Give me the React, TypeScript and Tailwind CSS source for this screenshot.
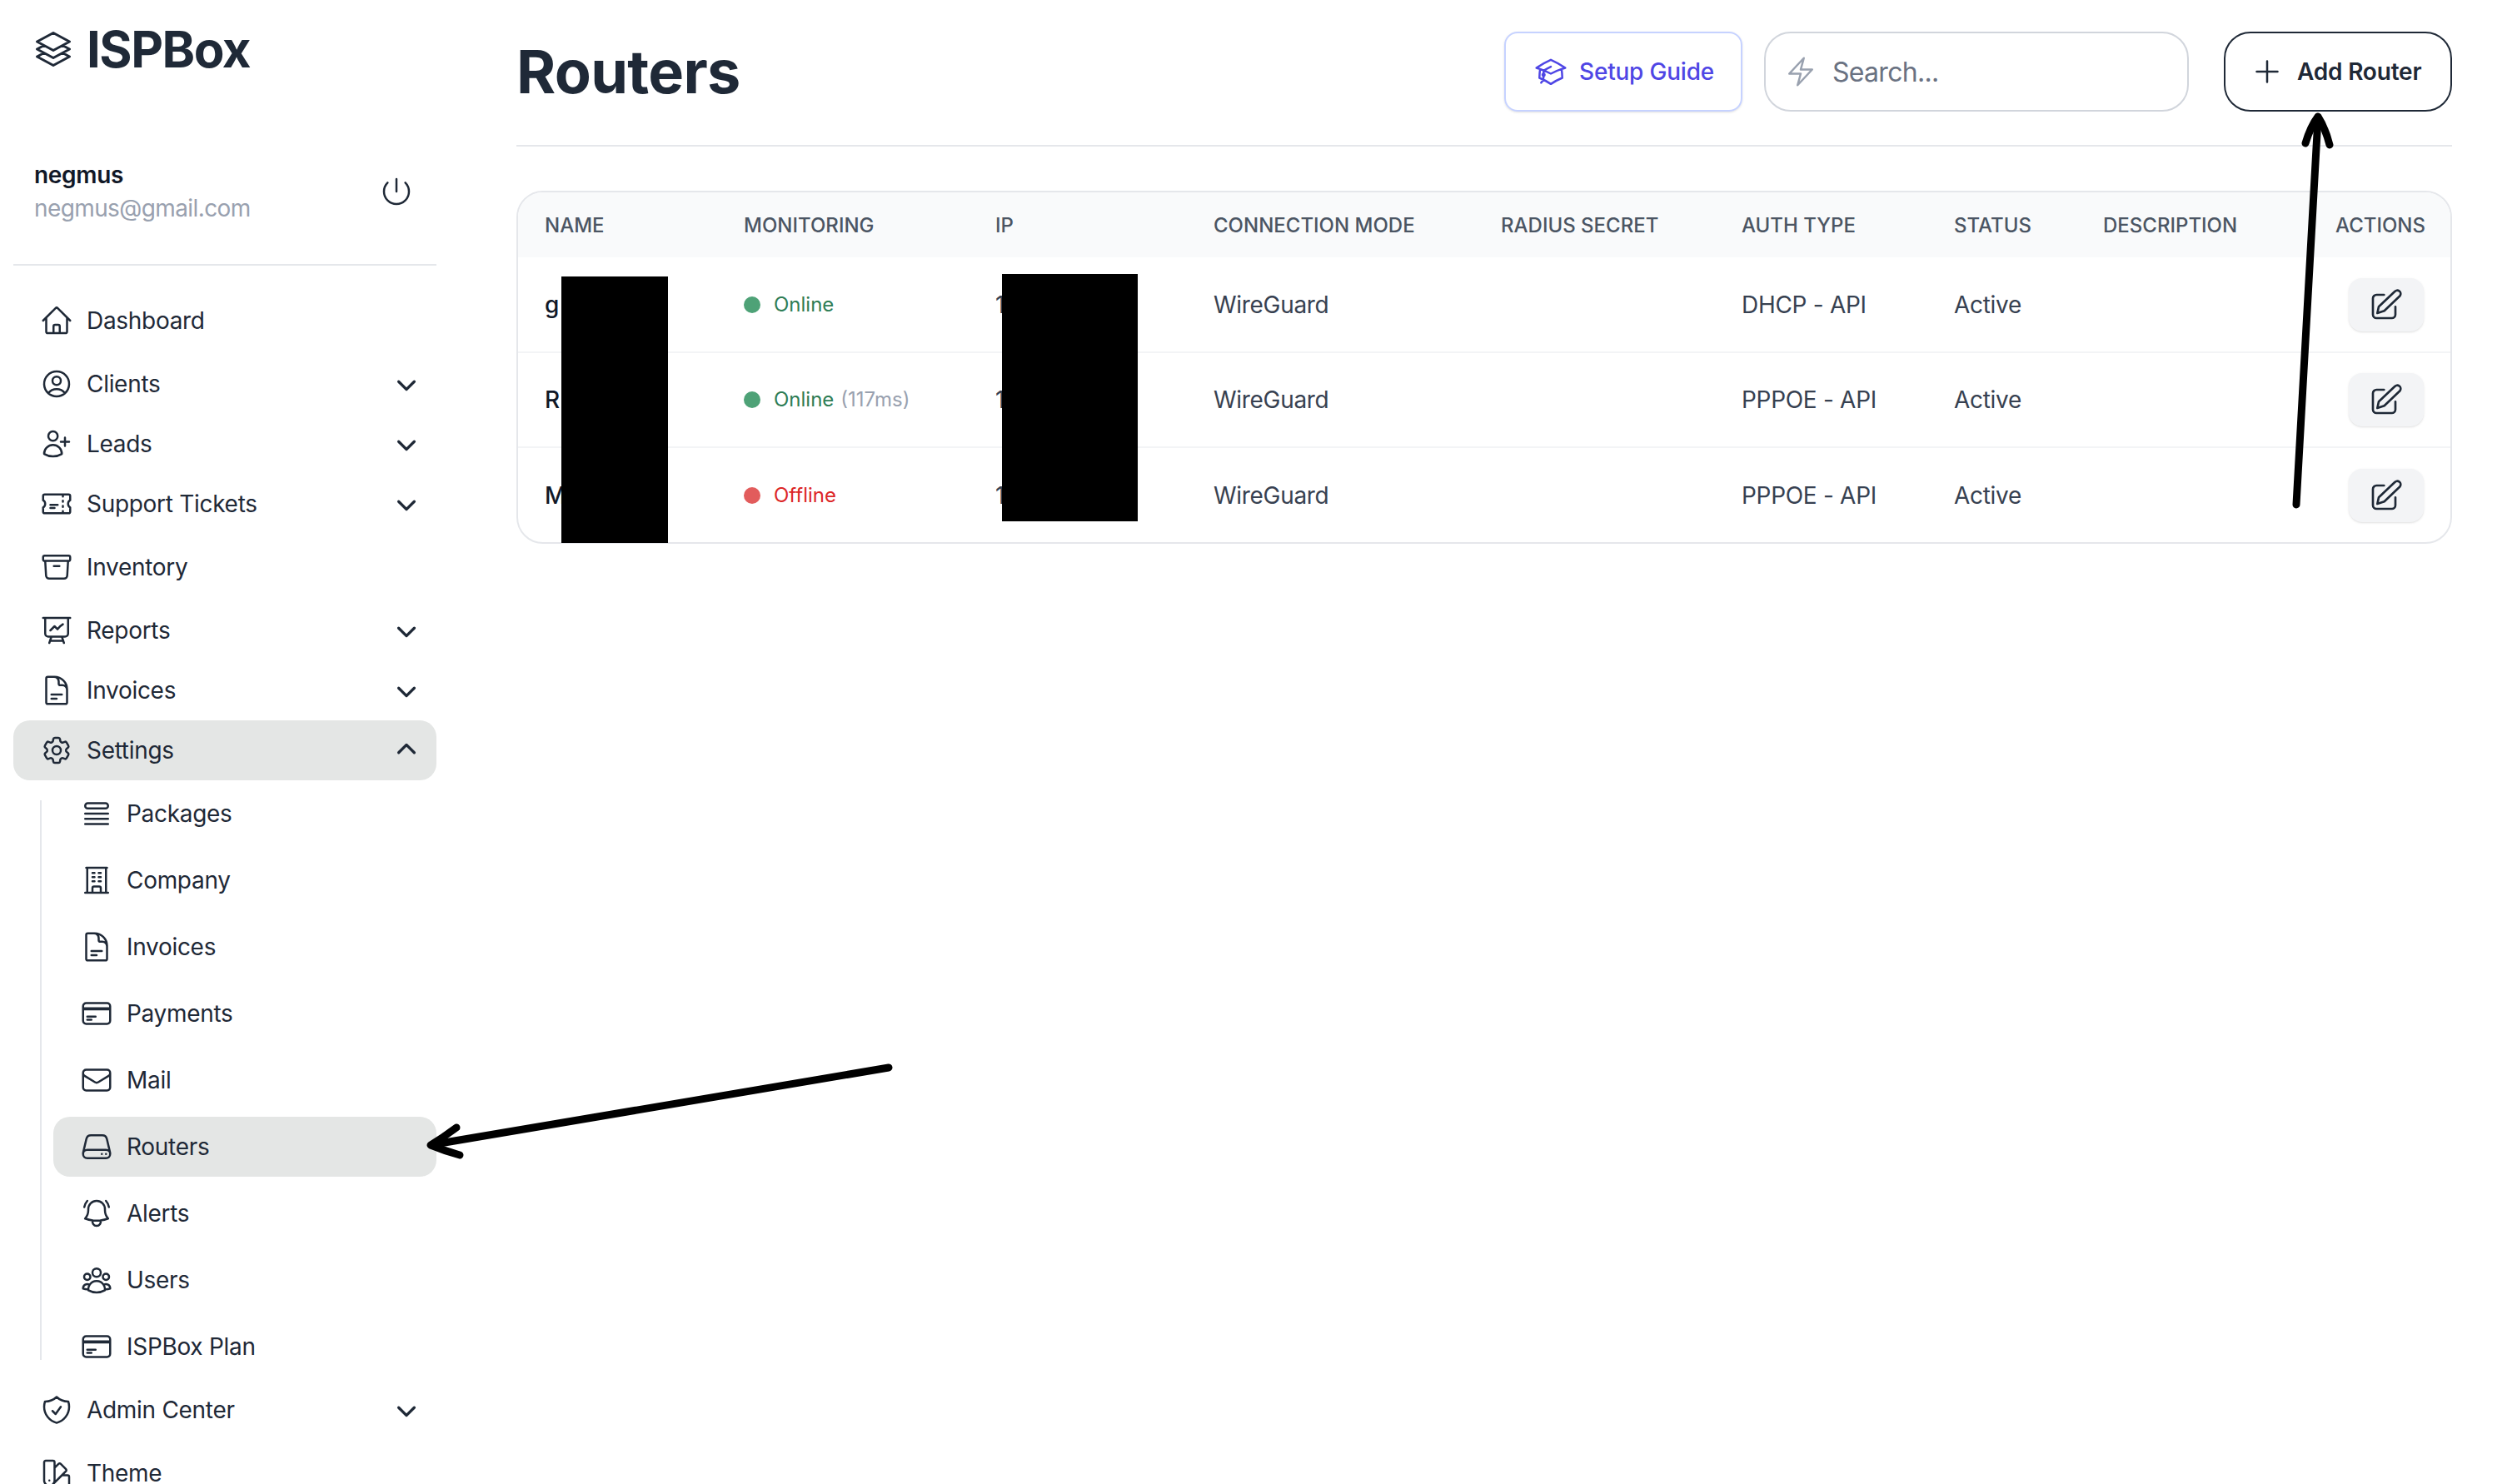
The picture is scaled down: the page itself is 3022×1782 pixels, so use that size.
import type { ComponentType, ReactNode } from "react";
import {
  HiMiniChevronDown,
  HiMiniChevronUp,
  HiOutlineAcademicCap,
  HiOutlineArchiveBox,
  HiOutlineBellAlert,
  HiOutlineBolt,
  HiOutlineBuildingOffice,
  HiOutlineCog6Tooth,
  HiOutlineCreditCard,
  HiOutlineDocumentText,
  HiOutlineEnvelope,
  HiOutlineHome,
  HiOutlinePlus,
  HiOutlinePower,
  HiOutlinePresentationChartLine,
  HiOutlineQueueList,
  HiOutlineServer,
  HiOutlineShieldCheck,
  HiOutlineSquare3Stack3D,
  HiOutlineSwatch,
  HiOutlineTicket,
  HiOutlineUserCircle,
  HiOutlineUserGroup,
  HiOutlineUserPlus,
} from "react-icons/hi2";

type Icon = ComponentType<{ className?: string }>;

const topNav: { label: string; icon: Icon; caret?: boolean }[] = [
  { label: "Dashboard", icon: HiOutlineHome },
  { label: "Clients", icon: HiOutlineUserCircle, caret: true },
  { label: "Leads", icon: HiOutlineUserPlus, caret: true },
  { label: "Support Tickets", icon: HiOutlineTicket, caret: true },
  { label: "Inventory", icon: HiOutlineArchiveBox },
  { label: "Reports", icon: HiOutlinePresentationChartLine, caret: true },
  { label: "Invoices", icon: HiOutlineDocumentText, caret: true },
];

const settingsNav: { label: string; icon: Icon; active?: boolean }[] = [
  { label: "Packages", icon: HiOutlineQueueList },
  { label: "Company", icon: HiOutlineBuildingOffice },
  { label: "Invoices", icon: HiOutlineDocumentText },
  { label: "Payments", icon: HiOutlineCreditCard },
  { label: "Mail", icon: HiOutlineEnvelope },
  { label: "Routers", icon: HiOutlineServer, active: true },
  { label: "Alerts", icon: HiOutlineBellAlert },
  { label: "Users", icon: HiOutlineUserGroup },
  { label: "ISPBox Plan", icon: HiOutlineCreditCard },
];

const routers = [
  { name: "g", online: true, latency: "", ip: "1", auth: "DHCP - API" },
  { name: "R", online: true, latency: "(117ms)", ip: "1", auth: "PPPOE - API" },
  { name: "M", online: false, latency: "", ip: "1", auth: "PPPOE - API" },
];

const NavRow = ({ label, icon: Icon, caret }: { label: string; icon: Icon; caret?: boolean }) => (
  <li className={`flex items-center gap-4 px-8 ${caret ? "h-[72px]" : "h-[80px]"}`}>
    <Icon className="h-10 w-10 shrink-0" />
    <span>{label}</span>
    {caret && <HiMiniChevronDown className="ml-auto mr-[-18px] h-11 w-11" />}
  </li>
);

const Th = ({ className, children }: { className: string; children: ReactNode }) => (
  <th className={`pl-8 pt-px text-left text-[24px] font-medium uppercase tracking-normal text-[#4b5563] ${className}`}>{children}</th>
);

const EditIcon = () => (
  <svg viewBox="0 0 24 24" className="h-10 w-10 text-[#1f2937]" fill="none" stroke="currentColor" strokeWidth="1.6" strokeLinecap="round" strokeLinejoin="round">
    <path d="M10.4 4.8H5a2.6 2.6 0 0 0-2.6 2.6V19A2.6 2.6 0 0 0 5 21.6h11a2.6 2.6 0 0 0 2.6-2.6v-5.6" />
    <path d="M5.6 18 6.6 13.4 18 2.6a2.3 2.3 0 0 1 3.9 2.9L10.6 16.4Z" />
  </svg>
);

export default function App() {
  return (
    <div className="relative flex h-[1782px] w-[3022px] overflow-hidden bg-white font-['Inter',sans-serif] text-[28px] tracking-[-0.3px] text-[#1f2937]">
      <aside className="w-[540px] shrink-0 px-4">
        <div className="flex h-[118px] items-center gap-4 pl-6">
          <HiOutlineSquare3Stack3D className="h-12 w-12" />
          <span className="text-[60px] font-bold tracking-[-1.5px]">ISPBox</span>
        </div>
        <div className="flex items-center justify-between border-b-2 border-gray-200 pb-[47px] pl-[25px] pr-[28px] pt-[72px]">
          <div className="leading-[40px]">
            <div className="font-semibold text-[#111827]">negmus</div>
            <div className="tracking-[-0.6px] text-gray-400">negmus@gmail.com</div>
          </div>
          <HiOutlinePower className="h-10 w-10" />
        </div>
        <ul className="mt-[26px]">
          {topNav.map((item) => (
            <NavRow key={item.label} {...item} />
          ))}
          <li className="flex h-[72px] items-center gap-4 rounded-[20px] bg-[#e4e6e5] px-8">
            <HiOutlineCog6Tooth className="h-10 w-10 shrink-0" />
            <span>Settings</span>
            <HiMiniChevronUp className="ml-auto mr-[-18px] h-11 w-11" />
          </li>
          <li>
            <ul className="relative ml-8 flex flex-col gap-2 py-1 pl-4">
              <span className="absolute bottom-6 left-0 top-6 w-0.5 bg-gray-200" />
              {settingsNav.map(({ label, icon: Icon, active }) => (
                <li
                  key={label}
                  className={`flex h-[72px] items-center gap-4 rounded-[20px] px-8 ${active ? "bg-[#e4e6e5]" : ""}`}
                >
                  <Icon className="h-10 w-10 shrink-0" />
                  <span>{label}</span>
                </li>
              ))}
            </ul>
          </li>
          <NavRow label="Admin Center" icon={HiOutlineShieldCheck} caret />
          <NavRow label="Theme" icon={HiOutlineSwatch} />
        </ul>
      </aside>

      <main className="min-w-0 flex-1 pl-20 pr-[78px]">
        <header className="flex h-[176px] items-center border-b-2 border-gray-200 pb-[2px]">
          <h1 className="text-[72px] font-bold tracking-[-0.7px]">Routers</h1>
          <button className="ml-auto flex h-[96px] w-[286px] items-center gap-[14px] rounded-2xl border-2 border-indigo-200 pl-[34px] font-medium tracking-[-0.2px] text-[#4f46e5] shadow-sm">
            <HiOutlineAcademicCap className="h-10 w-10" />
            Setup Guide
          </button>
          <div className="ml-[26px] flex h-[96px] w-[510px] items-center gap-4 rounded-[32px] border-2 border-gray-300 pl-[22px] text-[32px] tracking-[-0.7px] text-gray-500">
            <HiOutlineBolt className="h-10 w-10 text-gray-400" />
            <span className="pl-0.5 pt-[2px]">Search...</span>
          </div>
          <button className="ml-[42px] flex h-[96px] w-[274px] items-center gap-4 rounded-[32px] border-2 border-[#1f2937] pl-[30px] font-semibold tracking-[-0.2px]">
            <HiOutlinePlus className="h-10 w-10" />
            Add Router
          </button>
        </header>

        <div className="relative mt-[53px] overflow-hidden rounded-[32px] border-2 border-gray-200">
          <table className="w-full table-fixed border-collapse">
            <thead>
              <tr className="h-[78px] bg-[#f9fafb]">
                <Th className="w-[239px] pl-[32px]">Name</Th>
                <Th className="w-[302px]">Monitoring</Th>
                <Th className="w-[262px]">IP</Th>
                <Th className="w-[345px]">Connection Mode</Th>
                <Th className="w-[289px]">Radius Secret</Th>
                <Th className="w-[255px]">Auth Type</Th>
                <Th className="w-[179px]">Status</Th>
                <Th className="w-[279px]">Description</Th>
                <Th className="w-[170px]">Actions</Th>
              </tr>
            </thead>
            <tbody className="text-[#374151]">
              {routers.map((router, i) => (
                <tr key={i} className={`h-[114px] ${i > 0 ? "border-t-2 border-gray-100" : ""}`}>
                  <td className="pl-[32px] font-medium text-[#111827]">{router.name}</td>
                  <td className="pl-8 text-[24px] tracking-normal">
                    <span className="flex items-center gap-4">
                      <span className={`h-5 w-5 rounded-full ${router.online ? "bg-[#4ea277]" : "bg-[#e25c5c]"}`} />
                      <span className={router.online ? "text-[#2f7d55]" : "text-[#dc2626]"}>
                        {router.online ? "Online" : "Offline"}
                        {router.latency && <span className="ml-2 text-gray-400">{router.latency}</span>}
                      </span>
                    </span>
                  </td>
                  <td className="pl-8">{router.ip}</td>
                  <td className="pl-8">WireGuard</td>
                  <td className="pl-8" />
                  <td className="pl-8">{router.auth}</td>
                  <td className="pl-8">Active</td>
                  <td className="pl-8" />
                  <td className="pl-8">
                    <button className="ml-[16px] flex h-16 w-[90px] items-center justify-center rounded-2xl bg-gray-100 shadow-sm">
                      <EditIcon />
                    </button>
                  </td>
                </tr>
              ))}
            </tbody>
          </table>
        </div>
      </main>

      {/* redaction blocks painted over the screenshot */}
      <div className="absolute left-[674px] top-[332px] h-[320px] w-[128px] bg-black" />
      <div className="absolute left-[1203px] top-[329px] h-[297px] w-[163px] bg-black" />

      {/* hand drawn annotation arrows */}
      <svg className="pointer-events-none absolute inset-0" width="3022" height="1782" fill="none" stroke="#000" strokeLinecap="round" strokeLinejoin="round">
        <path d="M2757 606 L2783 142" strokeWidth="9" />
        <path d="M2768 172 Q2774 152 2783 140 Q2792 154 2797 174" strokeWidth="9" />
        <path d="M1067 1282 L522 1374" strokeWidth="9" />
        <path d="M548 1354 Q532 1366 517 1375 Q534 1382 552 1387" strokeWidth="9" />
      </svg>
    </div>
  );
}
